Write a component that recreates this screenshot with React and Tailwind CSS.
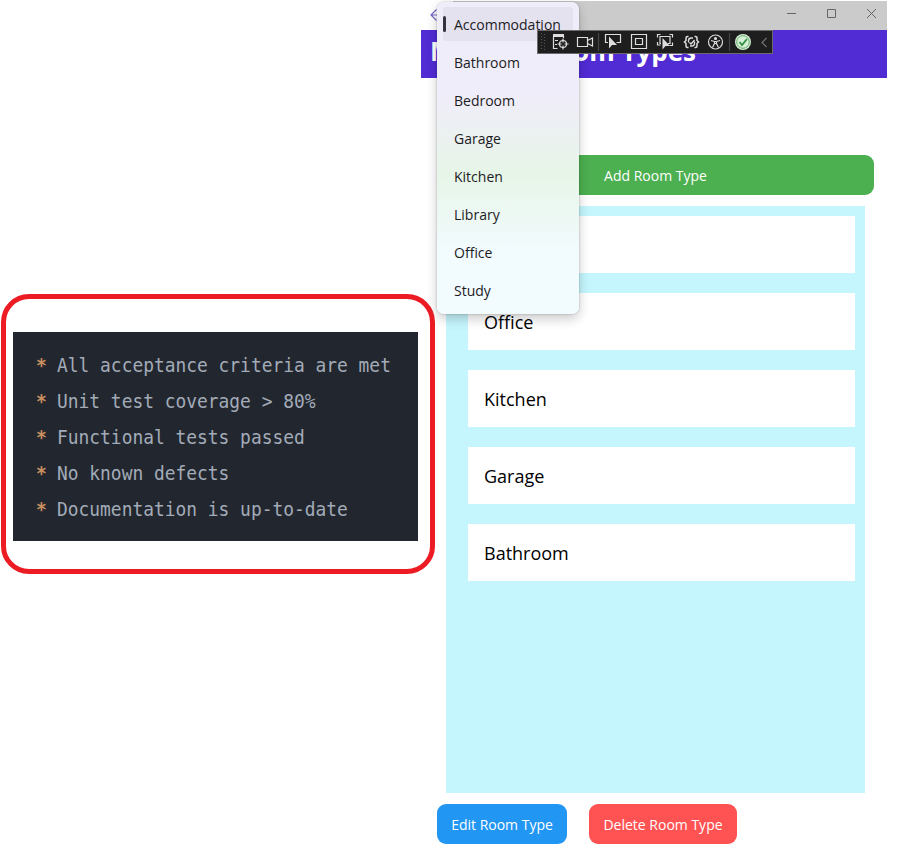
const criteria = [
  'All acceptance criteria are met',
  'Unit test coverage > 80%',
  'Functional tests passed',
  'No known defects',
  'Documentation is up-to-date',
];
const options = ['Accommodation', 'Bathroom', 'Bedroom', 'Garage', 'Kitchen', 'Library', 'Office', 'Study'];
const rooms = ['', 'Office', 'Kitchen', 'Garage', 'Bathroom'];

function CriteriaCard() {
  return (
    <section className="mt-[294px] ml-px -mr-[14px] h-[280px] w-[434px] shrink-0 rounded-[28px] border-[5px] border-[#ed1c24] pt-[33px] pl-[7px]">
      <ul className="h-[209px] w-[405px] bg-[#22272f] pt-[15px] pl-[23px] font-['DejaVu_Sans_Mono',monospace] text-[17.9px] text-[#a3abb8]">
        {criteria.map((text) => (
          <li key={text} className="flex h-9 origin-center scale-y-110 items-center whitespace-pre">
            <span className="w-[21px] font-bold text-[#c9905f]">*</span>
            {text}
          </li>
        ))}
      </ul>
    </section>
  );
}

function TitleBar() {
  return (
    <div className="mt-px flex h-[29px] items-center justify-between bg-[#cbcbcb]">
      <div className="flex h-full w-[32px] items-center bg-white pl-[9px]">
        <svg width="12" height="12" viewBox="0 0 12 12" fill="none" stroke="#7566c5" strokeWidth="1.2" className="mb-[2px]"><path d="M6.500 .5L1 6l5.500 5.500M1 6h11" /></svg>
      </div>
      <svg width="106" height="14" viewBox="0 0 106 14" fill="none" stroke="#666" strokeWidth="1" className="mb-[5px]">
        <path d="M6 7.500h9M46.500 3.500h8v8h-8zM86 3l9 9M95 3l-9 9" />
      </svg>
    </div>
  );
}

function DebugToolbar() {
  return (
    <div className="absolute top-[30px] left-[537px] h-6 w-[236px] border border-[#6a6a6a] bg-[#1e1e1e]">
      <svg width="234" height="22" viewBox="538 31 234 22" fill="none" stroke="#dedede" strokeWidth="1.2">
        <path d="M541.500 33v18M544.500 34v18" stroke="#555" strokeDasharray="1 2" />
        <path d="M553 35.500h11" strokeWidth="3" />
        <path d="M553.500 36v12.500h4M555 40.500h3M555 44.500h2M563.500 36v2" />
        <circle cx="563" cy="44" r="3.500" />
        <path d="M563 38.500v4M563 45.500v4M557.500 44h4M564.500 44h4" />
        <path d="M577.500 37.500h10v9h-10zM587.500 40.500l5-2.500v8l-5-2.500" />
        <path d="M598.500 33v18M729.500 33v18" stroke="#454545" />
        <path d="M608 42.500h-2.500v-8h15v8h-4" />
        <path d="M609 36.500v12l3-3.500h5z" fill="#dedede" stroke="none" />
        <path d="M631.500 34.500h15v14h-15zM635.500 38.500h7v6h-7z" />
        <path d="M657.500 37.500v-3h3M669.500 34.500h3v3M657.500 42v3h3M669.500 45.500h3v-3M661 43.500h-1v-7h10v7h-2" />
        <path d="M662.500 38v11.500l3-3.500h4.500z" fill="#dedede" stroke="none" />
        <path d="M688.500 36.500h-1q-1.500 0-1.500 1.500v2.500l-1.500 1.500 1.500 1.500v2.500q0 1.500 1.500 1.500h1M694.500 36.500h1q1.500 0 1.500 1.500v2.500l1.500 1.500-1.500 1.500v2.500q0 1.500-1.500 1.500h-1" strokeWidth="1.500" />
        <path d="M688.500 42.500v-2q0-2.500 3-2.500h1.500M694.500 41.500v2q0 2.500-3 2.500h-1.500M689.500 42.500l1.500 1.500 3.500-4" strokeWidth="1.300" />
        <circle cx="715.500" cy="42" r="7" />
        <circle cx="715.500" cy="38.500" r="1" fill="#dedede" />
        <path d="M711 40.500l3.500 1h2l3.500-1M714.500 41.500v2l-2 4M716.500 41.500v2l2 4M714.500 43.500h2" />
        <circle cx="743" cy="42" r="8" fill="#d8efd7" stroke="none" />
        <circle cx="743" cy="42" r="6.300" stroke="#54a45a" strokeWidth="0.900" />
        <path d="M739.500 42l2.500 3 5-6" stroke="#2f9041" strokeWidth="1.800" />
        <path d="M766.500 38l-4.500 4.500 4.500 4.500" stroke="#737373" />
      </svg>
    </div>
  );
}

function RoomDropdown() {
  return (
    <ul className="absolute top-[2px] left-[437px] h-[312px] w-[142px] rounded-[7px] bg-linear-to-b from-[#f0edfa] from-30% via-[#e7f5e8] via-55% to-[#f2fbfe] to-80% pt-[3px] text-[14px] text-[#1c1c1f] shadow-[0_5px_12px_rgba(0,0,0,0.2),0_0_2px_rgba(0,0,0,0.3)]">
      {options.map((name, i) => (
        <li key={name} className="flex h-[38px] items-center px-[6px]">
          <span className={i === 0 ? 'flex h-[34px] w-full items-center rounded bg-[#e5e2ef]' : 'flex h-[34px] w-full items-center'}>
            <i className={i === 0 ? 'h-4 w-[3px] rounded bg-[#36333f]' : 'w-[3px]'} />
            <span className="ml-2">{name}</span>
          </span>
        </li>
      ))}
    </ul>
  );
}

export default function App() {
  return (
    <div className="relative flex h-[858px] w-[902px] items-start overflow-hidden bg-white font-['Open_Sans',sans-serif]">
      <CriteriaCard />
      <main className="flex w-[466px] shrink-0 flex-col">
        <TitleBar />
        <h1 className="h-12 bg-[#512bd4] pl-[9px] text-[26px] leading-[43px] font-bold whitespace-nowrap text-white">Manage Room Types</h1>
        <button className="mt-[77px] ml-4 h-10 w-[437px] rounded-[9px] bg-[#4caf50] text-[14px] text-white">Add Room Type</button>
        <div className="mt-[11px] ml-[25px] flex h-[587px] w-[419px] flex-col gap-5 bg-[#c5f6fd] pt-[10px] pr-[10px] pl-[22px]">
          {rooms.map((room, i) => (
            <div key={i} className="flex h-[57px] items-center bg-white pt-[2px] pl-4 text-[18px] text-black">{room}</div>
          ))}
        </div>
        <div className="mt-[11px] ml-4 flex gap-[22px] text-[14px] text-white">
          <button className="h-10 w-[130px] rounded-[9px] bg-[#2196f3]">Edit Room Type</button>
          <button className="h-10 w-[148px] rounded-[9px] bg-[#ff5252]">Delete Room Type</button>
        </div>
      </main>
      <RoomDropdown />
      <DebugToolbar />
    </div>
  );
}
